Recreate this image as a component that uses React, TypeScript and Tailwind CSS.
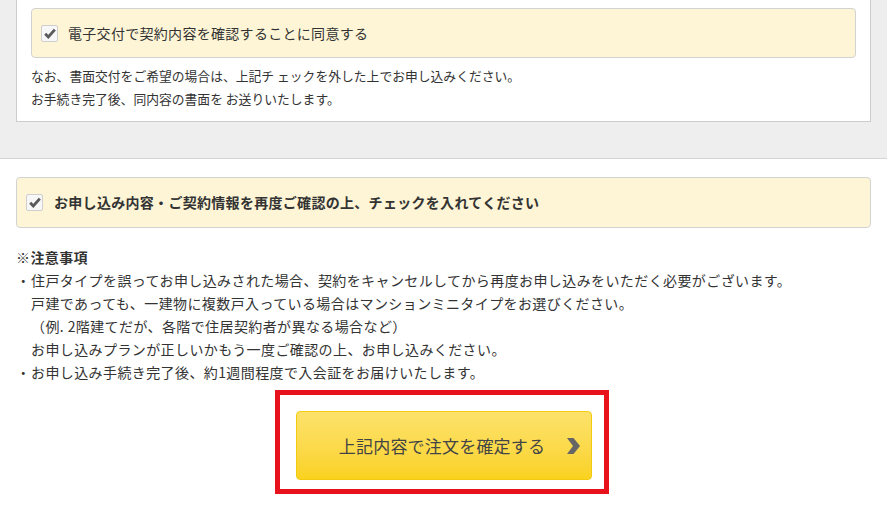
import { ReactNode } from 'react';

const font = { fontFamily: '"Meiryo", "Noto Sans CJK JP", "Noto Sans", sans-serif' };

function CheckBox() {
  return (
    <span className="flex h-[17px] w-[17px] shrink-0 items-center justify-center rounded-[2px] border border-[#cfcfcf] bg-[#f7f7f7]">
      <svg width="12" height="11" viewBox="0 0 12 11">
        <path d="M1.2 5.8 L4.3 9 L10.8 1.6" fill="none" stroke="#5a5a5a" strokeWidth="2.8" />
      </svg>
    </span>
  );
}

function NoteLine({ children, bullet }: { children: ReactNode; bullet?: boolean }) {
  return (
    <p className="flex h-[23px] items-center whitespace-nowrap">
      <span className="w-[15px] shrink-0 text-center">{bullet ? '・' : ''}</span>
      <span>{children}</span>
    </p>
  );
}

export default function App() {
  return (
    <div className="min-h-screen w-[887px] bg-white text-[#333]" style={font}>
      {/* gray upper section */}
      <section className="border-b border-[#d4d4d4] bg-[#eeeeee] px-4 pb-[36px]">
        <div className="border-x border-b border-[#cccccc] bg-white px-[14px] pb-[11px] pt-[8px]">
          <label className="flex h-[50px] items-center gap-[10px] rounded-[4px] border border-[#d2d2d2] bg-[#fef5d6] pl-[9px]">
            <CheckBox />
            <span className="text-[14px] tracking-[0.3px]">電子交付で契約内容を確認することに同意する</span>
          </label>
          <div className="mt-[6px] text-[12.8px]">
            <p className="h-[23px] leading-[23px]">なお、書面交付をご希望の場合は、上記チ ェックを外した上でお申し込みください。</p>
            <p className="h-[23px] leading-[23px]">お手続き完了後、同内容の書面を お送りいたします。</p>
          </div>
        </div>
      </section>

      <main className="px-4 pt-[18px]">
        <label className="flex h-[51px] items-center gap-[11px] rounded-[4px] border border-[#d2d2d2] bg-[#fef5d6] pl-[9px]">
          <CheckBox />
          <span className="text-[14px] font-bold tracking-[0.3px]">お申し込み内容・ご契約情報を再度ご確認の上、チェックを入れてください</span>
        </label>

        <div className="mt-[17px] text-[14px] tracking-[0.4px]">
          <p className="h-[24px] font-bold leading-[24px]">※注意事項</p>
          <NoteLine bullet>住戸タイプを誤ってお申し込みされた場合、契約をキャンセルしてから再度お申し込みをいただく必要がございます。</NoteLine>
          <NoteLine>戸建であっても、一建物に複数戸入っている場合はマンションミニタイプをお選びください。</NoteLine>
          <NoteLine>（例. 2階建てだが、各階で住居契約者が異なる場合など）</NoteLine>
          <NoteLine>お申し込みプランが正しいかもう一度ご確認の上、お申し込みください。</NoteLine>
          <NoteLine bullet>お申し込み手続き完了後、約1週間程度で入会証をお届けいたします。</NoteLine>
        </div>

        <div className="mt-[6px] flex justify-center">
          <div className="ml-[-3px] border-[5px] border-[#e8121c] pb-[9px] pl-[16px] pr-[12px] pt-[16px]">
            <button className="relative flex h-[69px] w-[296px] items-center justify-center rounded-[4px] border border-[#f2cb10] bg-gradient-to-b from-[#fde26a] to-[#fad21c] text-[17px] font-normal text-[#444]">
              <span className="ml-[-4px] tracking-[0.2px]">上記内容で注文を確定する</span>
              <svg className="absolute right-[11px] top-[26px]" width="13" height="16" viewBox="0 0 13 16">
                <polygon points="0,0 6.5,0 13,8 6.5,16 0,16 6,8" fill="#666" />
              </svg>
            </button>
          </div>
        </div>
      </main>
    </div>
  );
}
